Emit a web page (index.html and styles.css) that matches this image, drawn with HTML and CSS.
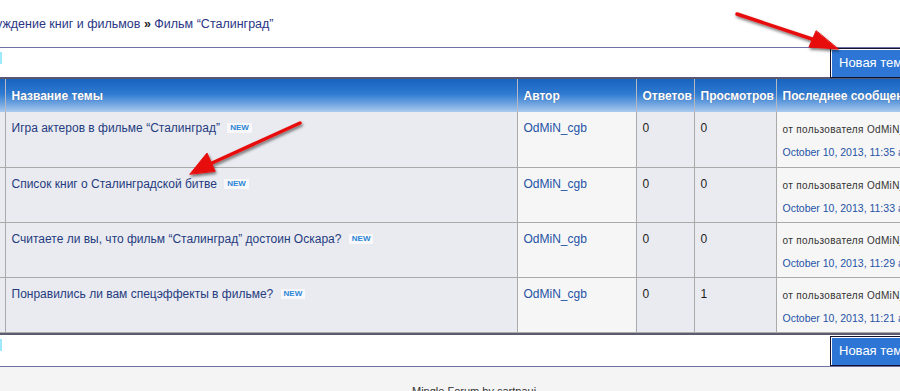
FILE: index.html
```html
<!DOCTYPE html>
<html lang="ru">
<head>
    <meta charset="UTF-8">
    <meta name="viewport" content="width=device-width, initial-scale=1.0">
    <title>Фильм “Сталинград”</title>
    <link rel="stylesheet" href="styles.css">
</head>
<body>
    <div class="page">
        <!-- Breadcrumbs -->
        <div class="crumbs">
            <a href="#" class="crumb-cut">Обсуждение книг и фильмов</a> <b>»</b> <a href="#">Фильм “Сталинград”</a>
        </div>

        <!-- Top toolbar -->
        <div class="bar">
            <div class="pager"><span class="pager-mark"></span></div>
            <a href="#" class="new-btn">Новая тема</a>
        </div>

        <!-- Topics -->
        <table class="topics">
            <colgroup>
                <col class="c-icon">
                <col class="c-title">
                <col class="c-author">
                <col class="c-replies">
                <col class="c-views">
                <col class="c-last">
            </colgroup>
            <thead>
                <tr>
                    <th></th>
                    <th>Название темы</th>
                    <th>Автор</th>
                    <th>Ответов</th>
                    <th>Просмотров</th>
                    <th>Последнее сообщение</th>
                </tr>
            </thead>
            <tbody>
                <tr>
                    <td class="icon"></td>
                    <td class="title"><a href="#">Игра актеров в фильме “Сталинград”</a> <span class="new">NEW</span></td>
                    <td class="author"><a href="#">OdMiN_cgb</a></td>
                    <td class="num">0</td>
                    <td class="num">0</td>
                    <td class="last"><span class="by">от пользователя OdMiN_cgb</span><a href="#">October 10, 2013, 11:35 am</a></td>
                </tr>
                <tr>
                    <td class="icon"></td>
                    <td class="title"><a href="#">Список книг о Сталинградской битве</a> <span class="new">NEW</span></td>
                    <td class="author"><a href="#">OdMiN_cgb</a></td>
                    <td class="num">0</td>
                    <td class="num">0</td>
                    <td class="last"><span class="by">от пользователя OdMiN_cgb</span><a href="#">October 10, 2013, 11:33 am</a></td>
                </tr>
                <tr>
                    <td class="icon"></td>
                    <td class="title"><a href="#">Считаете ли вы, что фильм “Сталинград” достоин Оскара?</a> <span class="new">NEW</span></td>
                    <td class="author"><a href="#">OdMiN_cgb</a></td>
                    <td class="num">0</td>
                    <td class="num">0</td>
                    <td class="last"><span class="by">от пользователя OdMiN_cgb</span><a href="#">October 10, 2013, 11:29 am</a></td>
                </tr>
                <tr>
                    <td class="icon"></td>
                    <td class="title"><a href="#">Понравились ли вам спецэффекты в фильме?</a> <span class="new">NEW</span></td>
                    <td class="author"><a href="#">OdMiN_cgb</a></td>
                    <td class="num">0</td>
                    <td class="num">1</td>
                    <td class="last"><span class="by">от пользователя OdMiN_cgb</span><a href="#">October 10, 2013, 11:21 am</a></td>
                </tr>
            </tbody>
        </table>

        <!-- Bottom toolbar -->
        <div class="bar bar-bottom">
            <div class="pager"><span class="pager-mark"></span></div>
            <a href="#" class="new-btn">Новая тема</a>
        </div>
    </div>

    <div class="foot">Mingle Forum by cartpauj</div>

    <!-- Red annotation arrows drawn over the screenshot -->
    <svg class="arrows" width="900" height="391" viewBox="0 0 900 391">
        <defs>
            <filter id="shadow" x="-20%" y="-20%" width="140%" height="140%">
                <feDropShadow dx="1" dy="2" stdDeviation="1.5" flood-color="#000" flood-opacity="0.55"/>
            </filter>
        </defs>
        <g filter="url(#shadow)" fill="#e8100c" stroke="#e8100c" stroke-linecap="round">
            <line x1="737" y1="14" x2="815" y2="40" stroke-width="3.5"/>
            <polygon points="838,49 809,47 816,31" stroke-width="1" stroke-linejoin="round"/>
            <line x1="300" y1="123" x2="212" y2="163" stroke-width="3.5"/>
            <polygon points="190,174 207,153 215,171" stroke-width="1" stroke-linejoin="round"/>
        </g>
    </svg>
</body>
</html>
```

FILE: styles.css
```css
* {
    margin: 0;
    padding: 0;
    box-sizing: border-box;
}

body {
    width: 900px;
    height: 391px;
    overflow: hidden;
    background: #f4f4f4;
    font-family: "Liberation Sans", Arial, sans-serif;
    color: #222;
    position: relative;
}

a {
    text-decoration: none;
}

/* the page is scrolled a little to the right */
.page {
    width: 1000px;
    margin-left: -30px;
    background: #fff;
}

/* Breadcrumbs */
.crumbs {
    height: 47px;
    padding-top: 17px;
    font-size: 12.5px;
    line-height: 14px;
    color: #222;
    white-space: nowrap;
}
.crumbs a {
    color: #2a3585;
}
.crumb-cut {
    margin-left: 3px;
}

/* Toolbars */
.bar {
    display: grid;
    grid-template-columns: 860px auto;
    border-top: 1px solid #6f6fa2;
    border-bottom: 2px solid #585872;
    height: 32px;
    background: #fff;
}
.bar-bottom {
    border-top: 2px solid #5c5c6e;
    border-bottom: 1px solid #6f6fa2;
    height: 34px;
}
.pager {
    padding: 4px 0 0 30px;
}
.pager-mark {
    display: block;
    width: 2px;
    height: 12px;
    background: #9fe9ff;
}
.new-btn {
    display: block;
    width: 110px;
    height: 30px;
    padding: 6px 0 0 8px;
    font-size: 13px;
    line-height: 16px;
    color: #fff;
    background: #2d76d6;
    border: 1px solid #12122e;
    border-right: none;
    box-shadow: inset 1px 1px 0 #fff;
}
.bar-bottom .new-btn {
    height: 30px;
    margin-top: 1px;
}

/* Topic table */
.topics {
    width: 1000px;
    table-layout: fixed;
    border-collapse: collapse;
}
.c-icon { width: 35px; }
.c-title { width: 512px; }
.c-author { width: 119px; }
.c-replies { width: 58px; }
.c-views { width: 82px; }
.c-last { width: 194px; }

.topics th {
    height: 33px;
    padding: 0 6px;
    text-align: left;
    font-size: 12px;
    font-weight: bold;
    color: #fff;
    white-space: nowrap;
    overflow: hidden;
    text-shadow: 0 0 1px #3a5c90;
    background: linear-gradient(#1662bd, #2f7bd2 45%, #6fa3df 75%, #aacbee);
    border-left: 1px solid #b8b8c0;
}
.topics th:first-child {
    border-left: none;
}
.topics td {
    height: 55px;
    padding: 8px 6px 0;
    vertical-align: top;
    font-size: 12px;
    line-height: 16px;
    border-left: 1px solid #aaaaaa;
    border-bottom: 1px solid #aaaaaa;
    background: #eaebf0;
}
.topics td:first-child {
    border-left: none;
}
.topics td.author,
.topics td.last {
    background: #f6f6f6;
}
.title a {
    color: #253b80;
}
.new {
    display: inline-block;
    margin-left: 4px;
    padding: 0 3px;
    font-size: 8px;
    line-height: 10px;
    font-weight: bold;
    color: #2c86d6;
    background: #f8f8fb;
    vertical-align: 2px;
}
.author a {
    color: #2553a5;
}
.num {
    color: #1d1d1d;
}
.last {
    white-space: nowrap;
    overflow: hidden;
}
.topics td.last {
    padding-top: 9px;
}
.by {
    display: block;
    font-size: 10px;
    line-height: 18px;
    letter-spacing: 0.35px;
    color: #333;
}
.last a {
    display: block;
    font-size: 10.5px;
    line-height: 26px;
    color: #2553a5;
}

/* Footer */
.foot {
    padding: 18px 0 0 412px;
    font-size: 11px;
    color: #333;
}

/* Annotation */
.arrows {
    position: absolute;
    top: 0;
    left: 0;
    pointer-events: none;
}
```
